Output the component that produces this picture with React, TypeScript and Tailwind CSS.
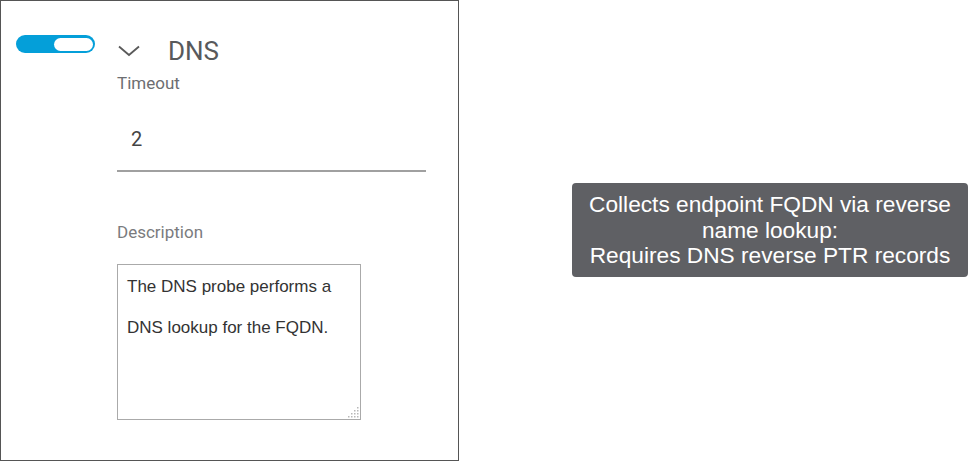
import React from "react";

const roboto = { fontFamily: "Roboto, 'Liberation Sans', sans-serif" };
const arial = { fontFamily: "'Liberation Sans', Arial, sans-serif" };

function Toggle() {
  return (
    <div className="flex h-[18px] w-[79px] items-center justify-end rounded-full bg-[#049fd9] pr-[2px]">
      <div className="h-[13px] w-[39px] rounded-full bg-white" />
    </div>
  );
}

function Chevron() {
  return (
    <svg width="22" height="12" viewBox="0 0 22 12" className="block">
      <polyline points="1,1.5 11,10 21,1.5" fill="none" stroke="#5a5a5a" strokeWidth="1.8" />
    </svg>
  );
}

// dotted resize grip, like the old chrome textarea corner
function Grip() {
  const dots = [
    [9, 0], [9, 3], [6, 3], [9, 6], [6, 6], [3, 6], [9, 9], [6, 9], [3, 9], [0, 9],
  ];
  return (
    <svg width="11" height="11" viewBox="0 0 11 11" className="pointer-events-none absolute bottom-[2px] right-[2px]">
      {dots.map(([x, y], i) => (
        <rect key={i} x={x} y={y} width="1.5" height="1.5" fill="#b8b8b8" />
      ))}
    </svg>
  );
}

export default function App() {
  return (
    <div className="flex h-[462px] w-[968px] bg-white" style={roboto}>
      <div className="flex h-[461px] w-[459px] shrink-0 flex-col border border-[#555]">
        <div className="flex items-start pl-[15px] pt-[34px]">
          <Toggle />
          <div className="ml-[23px] mt-[10px]">
            <Chevron />
          </div>
          <span className="ml-[28px] mt-[3px] text-[26px] leading-[26px] text-[#58595b]">DNS</span>
        </div>
        <div className="flex flex-col pl-[116px]">
          <label className="mt-[11px] text-[17px] leading-[17px] text-[#6d6e71]">Timeout</label>
          <div className="mt-[37px] pl-[14px] text-[20px] leading-[20px] text-[#444]">2</div>
          <div className="mt-[21px] h-[2px] w-[309px] bg-[#a0a0a0]" />
          <label className="mt-[52px] text-[17px] leading-[17px] text-[#7a7b7e]">Description</label>
          <div className="relative mt-[23px] h-[156px] w-[244px]">
            <textarea
              readOnly
              defaultValue={"The DNS probe performs a\n\nDNS lookup for the FQDN."}
              className="block h-full w-full resize-none border border-[#aaa] pl-[9px] pt-[12px] text-[17px] leading-[20.5px] text-[#333] outline-none"
              style={arial}
            />
            <Grip />
          </div>
        </div>
      </div>
      <div className="ml-[113px] mt-[183px] h-fit w-[396px] rounded-[4px] bg-[#5f6064] pb-[8px] pt-[9px] text-center text-[22.7px] leading-[25.5px] text-white" style={arial}>
        Collects endpoint FQDN via reverse
        <br />
        name lookup:
        <br />
        Requires DNS reverse PTR records
      </div>
    </div>
  );
}
